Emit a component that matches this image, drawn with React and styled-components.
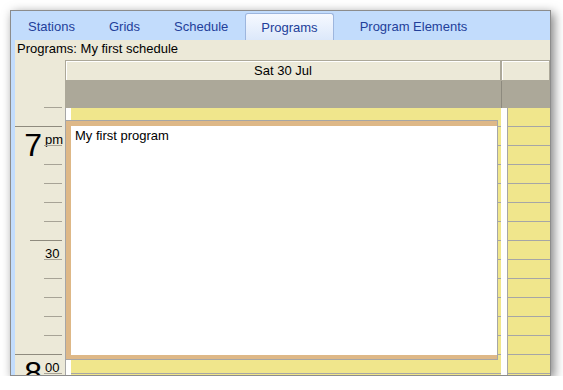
import React from 'react'
import styled, { createGlobalStyle, css } from 'styled-components'

const GlobalStyle = createGlobalStyle`
  html, body {
    margin: 0;
    padding: 0;
    background: #fff;
  }
  body {
    font-family: "Liberation Sans", Arial, sans-serif;
    font-size: 13px;
    color: #000;
  }
`

const Window = styled.div`
  margin: 10px 0 0 10px;
  width: 541px;
  height: 366px;
  box-sizing: border-box;
  border: 1px solid #8c8c8c;
  background: #c2dcfc;
  box-shadow: 3px 3px 10px rgba(0, 0, 0, 0.5);
  overflow: hidden;
  display: flex;
  flex-direction: column;
`

const TabStrip = styled.div`
  display: flex;
  height: 29px;
  flex-shrink: 0;
`

const Tab = styled.div`
  display: flex;
  align-items: center;
  padding: 2px 17px 0;
  margin-left: ${p => p.$gap || 0}px;
  color: #22409a;
  white-space: nowrap;

  ${p => p.$active && css`
    margin-top: 2px;
    padding: 0 15px;
    border: 1px solid #9db6de;
    border-bottom: none;
    border-radius: 3px 3px 0 0;
    background: linear-gradient(#f6f9ff, #dce8fa);
  `}
`

const Page = styled.div`
  flex: 1;
  min-height: 0;
  margin-left: 4px;
  background: #ece9d8;
  display: flex;
  flex-direction: column;
`

const Title = styled.div`
  height: 20px;
  box-sizing: border-box;
  padding: 1px 0 0 2px;
  line-height: 15px;
  flex-shrink: 0;
`

const Grid = styled.div`
  display: flex;
  flex: 1;
  min-height: 0;
`

const Ruler = styled.div`
  width: 50px;
  flex-shrink: 0;
  display: flex;
  flex-direction: column;
`

const RulerTop = styled.div`
  height: 29px;
  flex-shrink: 0;
`

const RulerSlot = styled.div`
  position: relative;
  height: 19px;
  flex-shrink: 0;
  display: grid;
  grid-template-columns: 27px 1fr;
  column-gap: 3px;
  align-items: start;

  &::after {
    content: '';
    position: absolute;
    left: ${p => p.$tick}px;
    right: 3px;
    bottom: 0;
    height: 1px;
    background: ${p => (p.$tick === 29 ? '#a7a396' : '#8f8b7e')};
  }
`

const HourNum = styled.div`
  grid-column: 1;
  font-size: 32px;
  line-height: 32px;
  margin-top: 2px;
  text-align: right;
`

const MinLabel = styled.div`
  grid-column: 2;
  line-height: 15px;
  margin-top: 5px;
`

const Day = styled.div`
  display: flex;
  flex-direction: column;
  width: ${p => (p.$width ? `${p.$width}px` : 'auto')};
  flex: ${p => (p.$width ? '0 0 auto' : '1')};
  min-width: 0;
`

const DayHeader = styled.div`
  height: 21px;
  flex-shrink: 0;
  box-sizing: border-box;
  border: 1px solid #aca899;
  box-shadow: inset 1px 1px 0 #fff;
  text-align: center;
  line-height: 19px;
  white-space: nowrap;
`

const Band = styled.div`
  height: 27px;
  flex-shrink: 0;
  background: #aca899;
  border-left: ${p => (p.$divider ? '1px solid #8d8a7e' : 'none')};
`

const DayBody = styled.div`
  position: relative;
  flex: 1;
  display: flex;
  min-height: 0;
`

const BusyStrip = styled.div`
  width: ${p => p.$w}px;
  flex-shrink: 0;
  background: #fff;
  border-left: ${p => (p.$edge ? '1px solid #a6a6a6' : 'none')};
`

const Slots = styled.div`
  flex: 1;
  display: flex;
  flex-direction: column;
  background: #f0e68c;
  border-left: ${p => (p.$edge ? '1px solid #a6a6a6' : 'none')};
`

const Slot = styled.div`
  height: 19px;
  flex-shrink: 0;
  box-sizing: border-box;
  border-bottom: 1px solid #a6a6a6;
`

const Event = styled.div`
  position: absolute;
  left: 0;
  top: 12px;
  width: 433px;
  height: 240px;
  box-sizing: border-box;
  border: 1px solid #a6a6a6;
  background: #deb887;
  padding: 5px 0 4px 5px;
  display: flex;
`

const EventBody = styled.div`
  flex: 1;
  background: #fff;
  padding: 2px 4px;
  line-height: 15px;
`

const ticks = [
  { tick: 29 },
  { tick: 0 },
  { tick: 29, hour: '7', label: 'pm' },
  { tick: 29 },
  { tick: 29 },
  { tick: 29 },
  { tick: 29 },
  { tick: 15 },
  { tick: 29, label: '30' },
  { tick: 29 },
  { tick: 29 },
  { tick: 29 },
  { tick: 29 },
  { tick: 0 },
  { tick: 29, hour: '8', label: '00' },
  { tick: 29 },
]

const slotRows = Array.from({ length: 15 }, (_, i) => i)

const tabs = ['Stations', 'Grids', 'Schedule', 'Programs', 'Program Elements']

export default function App() {
  return (
    <>
      <GlobalStyle />
      <Window>
        <TabStrip>
          {tabs.map(t => (
            <Tab key={t} $active={t === 'Programs'} $gap={t === 'Program Elements' ? 9 : 0}>
              {t}
            </Tab>
          ))}
        </TabStrip>
        <Page>
          <Title>Programs: My first schedule</Title>
          <Grid>
            <Ruler>
              <RulerTop />
              {ticks.map((t, i) => (
                <RulerSlot key={i} $tick={t.tick}>
                  {t.hour && <HourNum>{t.hour}</HourNum>}
                  {t.label && <MinLabel>{t.label}</MinLabel>}
                </RulerSlot>
              ))}
            </Ruler>

            <Day $width={436}>
              <DayHeader>Sat 30 Jul</DayHeader>
              <Band />
              <DayBody>
                <BusyStrip $w={5} $edge />
                <Slots>
                  {slotRows.map(i => <Slot key={i} />)}
                </Slots>
                <Event>
                  <EventBody>My first program</EventBody>
                </Event>
              </DayBody>
            </Day>

            <Day>
              <DayHeader />
              <Band $divider />
              <DayBody>
                <BusyStrip $w={6} />
                <Slots $edge>
                  {slotRows.map(i => <Slot key={i} />)}
                </Slots>
              </DayBody>
            </Day>
          </Grid>
        </Page>
      </Window>
    </>
  )
}
